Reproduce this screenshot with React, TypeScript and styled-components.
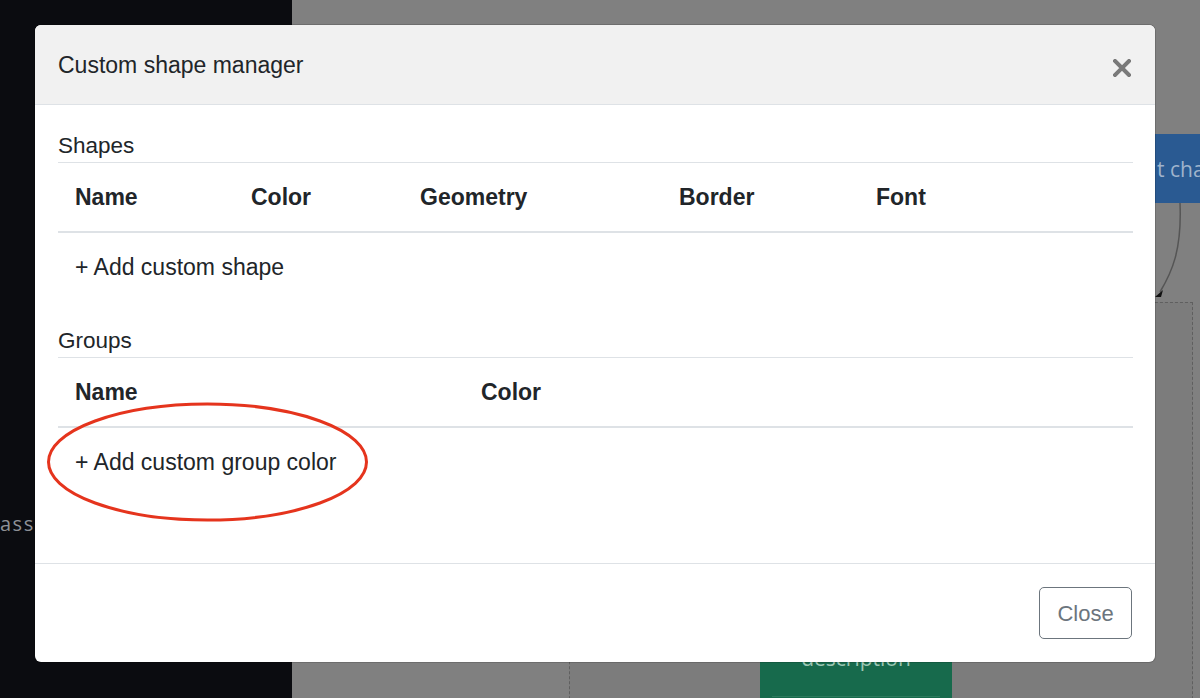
import React from 'react';
import styled, { createGlobalStyle } from 'styled-components';

const GlobalStyle = createGlobalStyle`
    html, body {
        margin: 0;
        padding: 0;
        width: 1200px;
        height: 698px;
        overflow: hidden;
        font-family: 'Liberation Sans', Arial, sans-serif;
    }
`

const Screen = styled.div`
    position: relative;
    width: 1200px;
    height: 698px;
    display: flex;
    overflow: hidden;
`

const Sidebar = styled.aside`
    width: 292px;
    flex-shrink: 0;
    background-color: #0b0c10;
    display: flex;
    flex-direction: column;
    padding-top: 510px;
    box-sizing: border-box;
`

const SidebarLabel = styled.span`
    font-family: 'Open Sans', sans-serif;
    font-size: 20px;
    letter-spacing: 1.5px;
    color: #8e9196;
`

const Canvas = styled.main`
    position: relative;
    flex-grow: 1;
    background-color: #808080;
`

// diagram nodes live on a free canvas, so they keep their coordinates
const Node = styled.div<{ $bg: string; $fg: string }>`
    position: absolute;
    display: flex;
    align-items: center;
    box-sizing: border-box;
    background-color: ${p => p.$bg};
    color: ${p => p.$fg};
    font-family: 'Open Sans', sans-serif;
    font-size: 21px;
    white-space: nowrap;
`

const Group = styled.div`
    position: absolute;
    left: 277px;
    top: 302px;
    width: 622px;
    height: 500px;
    border: 1.5px dashed #5f5f5f;
    background-color: rgba(0, 0, 0, 0.03);
`

const NodeRule = styled.div`
    position: absolute;
    left: 12px;
    right: 12px;
    bottom: 1px;
    height: 1px;
    background-color: #2c7a5d;
`

const Edges = styled.svg`
    position: absolute;
    left: 0;
    top: 0;
    width: 100%;
    height: 100%;
    pointer-events: none;
`

const Overlay = styled.div`
    position: absolute;
    inset: 0;
    padding: 25px 0 0 35px;
`

const Modal = styled.div`
    width: 1120px;
    height: 637px;
    display: flex;
    flex-direction: column;
    background-color: #ffffff;
    border-radius: 6px;
    overflow: hidden;
    box-shadow: 0 0 0 1px rgba(0, 0, 0, 0.15);
    color: #212529;
`

const Header = styled.header`
    height: 79px;
    flex-shrink: 0;
    display: flex;
    align-items: center;
    justify-content: space-between;
    padding: 0 24px 0 23px;
    background-color: #f1f1f1;
    border-bottom: 1px solid #dee2e6;
`

const Title = styled.h5`
    margin: 2px 0 0;
    font-size: 23px;
    font-weight: 400;
    line-height: 1.5;
`

const CloseX = styled.button`
    border: none;
    background: none;
    padding: 0;
    width: 18px;
    height: 18px;
    display: flex;
    margin-top: 6px;
`

const Body = styled.div`
    flex-grow: 1;
    padding: 24px 22px 0 23px;
`

const Caption = styled.div<{ $gap?: number }>`
    font-size: 22.5px;
    line-height: 33px;
    margin-top: ${p => p.$gap || 0}px;
    border-bottom: 1px solid #dee2e6;
`

const Row = styled.div<{ $cols: string; $head?: boolean }>`
    display: grid;
    grid-template-columns: ${p => p.$cols};
    height: 68px;
    align-items: center;
    font-size: 23px;
    font-weight: ${p => (p.$head ? 700 : 400)};
    border-bottom: ${p => (p.$head ? '2px solid #dee2e6' : 'none')};
`

const Cell = styled.div`
    padding-left: 17px;
    padding-top: 1px;
`

const Footer = styled.footer`
    height: 98px;
    flex-shrink: 0;
    display: flex;
    align-items: center;
    justify-content: flex-end;
    padding-right: 23px;
    border-top: 1px solid #dee2e6;
`

const Button = styled.button`
    width: 93px;
    height: 52px;
    border: 1px solid #6c757d;
    border-radius: 5px;
    background: transparent;
    color: #6c757d;
    font-family: 'Liberation Sans', Arial, sans-serif;
    font-size: 22px;
    padding-top: 2px;
`

const Annotation = styled.svg`
    position: absolute;
    left: 0;
    top: 0;
    width: 1200px;
    height: 698px;
    pointer-events: none;
`

const shapeCols = '176px 169px 259px 197px 1fr'
const groupCols = '406px 1fr'

export default function App() {
    return (
        <Screen>
            <GlobalStyle />
            <Sidebar>
                <SidebarLabel>ass</SidebarLabel>
            </Sidebar>
            <Canvas>
                <Group />
                <Node $bg="#2a5a92" $fg="#9fb3cc" style={{ left: 863, top: 134, width: 140, height: 69, paddingLeft: 2 }}>
                    t chart
                </Node>
                <Node $bg="#176a4c" $fg="#9cc6b3" style={{ left: 468, top: 600, width: 192, height: 98, justifyContent: 'center', alignItems: 'flex-start', paddingTop: 44 }}>
                    description
                    <NodeRule />
                </Node>
                <Edges>
                    <path d="M888 203 C 890 250, 880 272, 868 292" fill="none" stroke="#555" strokeWidth="1.5" />
                    <path d="M863 297 L 871 290 L 869 297 Z" fill="#111" />
                </Edges>
            </Canvas>
            <Overlay>
                <Modal>
                    <Header>
                        <Title>Custom shape manager</Title>
                        <CloseX aria-label="close">
                            <svg width="18" height="18" viewBox="0 0 18 18">
                                <path d="M2 2 L16 16 M16 2 L2 16" stroke="#7a7a7a" strokeWidth="4" strokeLinecap="square" />
                            </svg>
                        </CloseX>
                    </Header>
                    <Body>
                        <Caption>Shapes</Caption>
                        <Row $cols={shapeCols} $head>
                            <Cell>Name</Cell>
                            <Cell>Color</Cell>
                            <Cell>Geometry</Cell>
                            <Cell>Border</Cell>
                            <Cell>Font</Cell>
                        </Row>
                        <Row $cols="1fr">
                            <Cell>+ Add custom shape</Cell>
                        </Row>
                        <Caption $gap={23}>Groups</Caption>
                        <Row $cols={groupCols} $head>
                            <Cell>Name</Cell>
                            <Cell>Color</Cell>
                        </Row>
                        <Row $cols="1fr">
                            <Cell>+ Add custom group color</Cell>
                        </Row>
                    </Body>
                    <Footer>
                        <Button>Close</Button>
                    </Footer>
                </Modal>
            </Overlay>
            <Annotation>
                <ellipse cx="207.5" cy="462" rx="159" ry="58" fill="none" stroke="#e5341d" strokeWidth="3" />
            </Annotation>
        </Screen>
    )
}
